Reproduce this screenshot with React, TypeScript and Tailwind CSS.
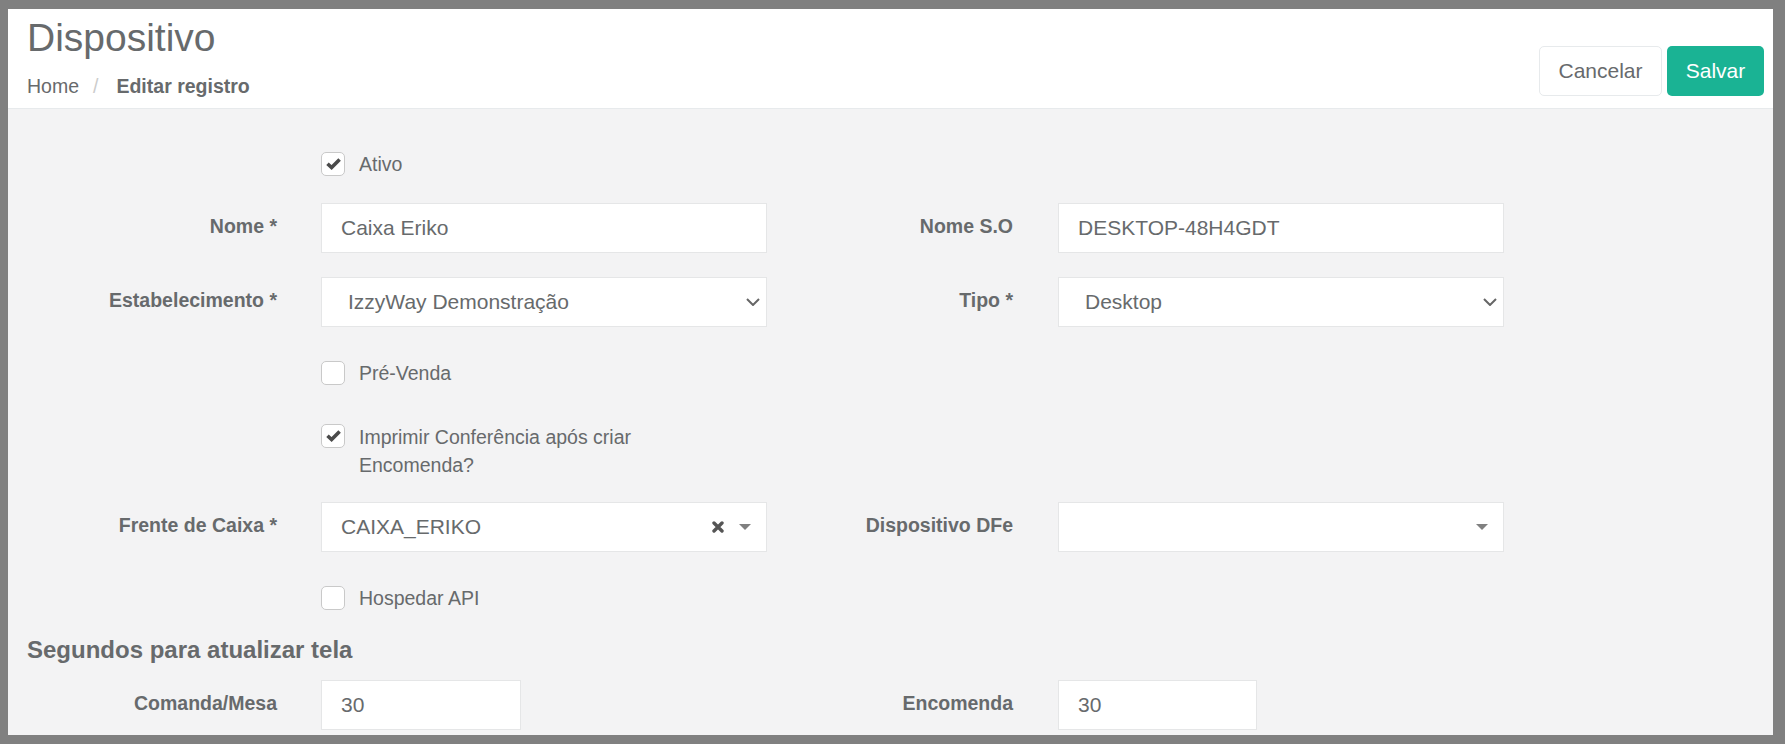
import React from 'react';

// ── Dispositivo: edição de registro ──────────────────────────────────────────

const Check = ({ checked }: { checked?: boolean }) => (
  <span className="flex h-[24px] w-[24px] shrink-0 items-center justify-center rounded-[5px] border border-[#c9c9c9] bg-white">
    {checked && (
      <svg width="24" height="24" viewBox="0 0 24 24" className="shrink-0">
        <path d="M6.5 11.8 L10.6 15.6 L18.6 7.6" fill="none" stroke="#4a4a4a" strokeWidth="3.6" strokeLinejoin="miter" />
      </svg>
    )}
  </span>
);

const CheckRow = ({ label, checked, wrap }: { label: string; checked?: boolean; wrap?: boolean }) => (
  <div className={`ml-[313px] flex ${wrap ? 'items-start' : 'items-center'}`}>
    <div className={wrap ? 'mt-[1px]' : ''}>
      <Check checked={checked} />
    </div>
    <span className={`ml-[14px] text-[19.5px] ${wrap ? 'w-[300px] leading-[28px]' : 'leading-[24px]'}`}>{label}</span>
  </div>
);

const Field = ({ label, right, children }: { label: string; right?: boolean; children: React.ReactNode }) => (
  <div className="flex items-start">
    <label className={`${right ? 'w-[246px]' : 'w-[269px]'} pt-[9px] text-right text-[19.5px] font-bold leading-[28px]`}>
      {label}
    </label>
    <div className={right ? 'ml-[45px]' : 'ml-[44px]'}>{children}</div>
  </div>
);

const Box = ({ value, w = 'w-[446px]' }: { value: string; w?: string }) => (
  <input
    readOnly
    defaultValue={value}
    className={`${w} h-[50px] border border-[#e5e6e7] bg-white pl-[19px] text-[21px] text-[#676a6c] outline-none`}
  />
);

const NativeSelect = ({ value }: { value: string }) => (
  <div className="flex h-[50px] w-[446px] items-center justify-between border border-[#e5e6e7] bg-white pl-[26px] pr-[6px] text-[21px]">
    <span>{value}</span>
    <svg width="14" height="8" viewBox="0 0 14 8">
      <path d="M1 1 L7 7 L13 1" fill="none" stroke="#666" strokeWidth="2" />
    </svg>
  </div>
);

const Select2 = ({ value, clear }: { value?: string; clear?: boolean }) => (
  <div className="flex h-[50px] w-[446px] items-center border border-[#e5e6e7] bg-white pl-[19px] pr-[15px] text-[21px]">
    <span className="flex-1">{value}</span>
    {clear && (
      <svg width="12" height="12" viewBox="0 0 12 12" className="mr-[15px]">
        <path d="M2 2 L10 10 M10 2 L2 10" stroke="#555" strokeWidth="3.4" strokeLinecap="round" />
      </svg>
    )}
    <svg width="12" height="6" viewBox="0 0 12 6">
      <path d="M0 0 L12 0 L6 6 Z" fill="#808080" />
    </svg>
  </div>
);

export default function App() {
  return (
    <div className="h-[744px] w-[1785px] bg-[#808080] pb-[9px] pl-[8px] pr-[12px] pt-[9px]">
      <div className="h-[726px] overflow-hidden bg-[#f3f3f4] font-['Liberation_Sans',Arial,sans-serif] text-[#676a6c]">
        {/* cabeçalho */}
        <div className="flex h-[100px] justify-between border-b border-[#e7eaec] bg-white pl-[19px] pr-[9px]">
          <div className="pt-[8px]">
            <h2 className="text-[39px] leading-[42px]">Dispositivo</h2>
            <div className="mt-[13px] flex text-[19.5px] leading-[28px]">
              <span>Home</span>
              <span className="ml-[14px] text-[#cccccc]">/</span>
              <span className="ml-[18px] font-bold">Editar registro</span>
            </div>
          </div>
          <div className="flex pt-[37px]">
            <button className="h-[50px] w-[123px] rounded-[5px] border border-[#e7eaec] bg-white text-[21px] text-[#676a6c]">
              Cancelar
            </button>
            <button className="ml-[5px] h-[50px] w-[97px] rounded-[5px] bg-[#1ab394] text-[21px] text-white">
              Salvar
            </button>
          </div>
        </div>

        {/* formulário */}
        <div className="pt-[43px]">
          <CheckRow label="Ativo" checked />

          <div className="mt-[27px] flex">
            <Field label="Nome *">
              <Box value="Caixa Eriko" />
            </Field>
            <Field label="Nome S.O" right>
              <Box value="DESKTOP-48H4GDT" />
            </Field>
          </div>

          <div className="mt-[24px] flex">
            <Field label="Estabelecimento *">
              <NativeSelect value="IzzyWay Demonstração" />
            </Field>
            <Field label="Tipo *" right>
              <NativeSelect value="Desktop" />
            </Field>
          </div>

          <div className="mt-[34px]">
            <CheckRow label="Pré-Venda" />
          </div>

          <div className="mt-[38px]">
            <CheckRow label="Imprimir Conferência após criar Encomenda?" checked wrap />
          </div>

          <div className="mt-[23px] flex">
            <Field label="Frente de Caixa *">
              <Select2 value="CAIXA_ERIKO" clear />
            </Field>
            <Field label="Dispositivo DFe" right>
              <Select2 />
            </Field>
          </div>

          <div className="mt-[34px]">
            <CheckRow label="Hospedar API" />
          </div>

          <h3 className="mt-[27px] pl-[19px] text-[24px] font-bold leading-[26px]">Segundos para atualizar tela</h3>

          <div className="mt-[17px] flex">
            <Field label="Comanda/Mesa">
              <div className="w-[446px]">
                <Box value="30" w="w-[200px]" />
              </div>
            </Field>
            <Field label="Encomenda" right>
              <Box value="30" w="w-[199px]" />
            </Field>
          </div>
        </div>
      </div>
    </div>
  );
}
